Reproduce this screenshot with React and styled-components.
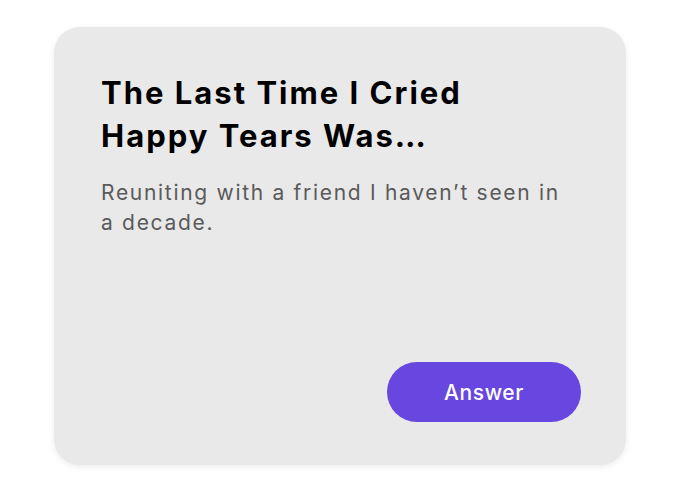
import styled, { createGlobalStyle } from "styled-components";

const GlobalStyle = createGlobalStyle`
  * { box-sizing: border-box; }
  body {
    margin: 0;
    background: #ffffff;
    font-family: "Inter", "Open Sans", sans-serif;
  }
`;

const Page = styled.div`
  height: 100vh;
  display: flex;
  justify-content: center;
  align-items: center;
`;

const Card = styled.div`
  width: 572px;
  height: 438px;
  background: #e9e9e9;
  border-radius: 26px;
  box-shadow: 0 2px 6px rgba(0, 0, 0, 0.08);
  padding: 44px 45px 43px 47px;
  display: flex;
  flex-direction: column;
`;

const Title = styled.h1`
  margin: 0;
  width: 400px;
  font-size: 31px;
  line-height: 43px;
  font-weight: 700;
  color: #000;
  letter-spacing: 2px;
`;

const Desc = styled.p`
  margin: 21px 0 0;
  width: 474px;
  font-size: 21px;
  line-height: 30px;
  font-weight: 400;
  color: #5a5a5a;
  letter-spacing: 1.7px;
`;

const Footer = styled.div`
  margin-top: auto;
  display: flex;
  justify-content: flex-end;
`;

const Button = styled.button`
  width: 194px;
  height: 60px;
  border: none;
  border-radius: 30px;
  background: #6846e0;
  color: #fff;
  font-family: inherit;
  font-size: 21px;
  font-weight: 500;
  letter-spacing: 0.6px;
  cursor: pointer;
`;

const App = () => {
  return (
    <>
      <GlobalStyle />
      <Page>
        <Card>
          <Title>The Last Time I Cried Happy Tears Was…</Title>
          <Desc>Reuniting with a friend I haven’t seen in a decade.</Desc>
          <Footer>
            <Button>Answer</Button>
          </Footer>
        </Card>
      </Page>
    </>
  );
};

export default App;
